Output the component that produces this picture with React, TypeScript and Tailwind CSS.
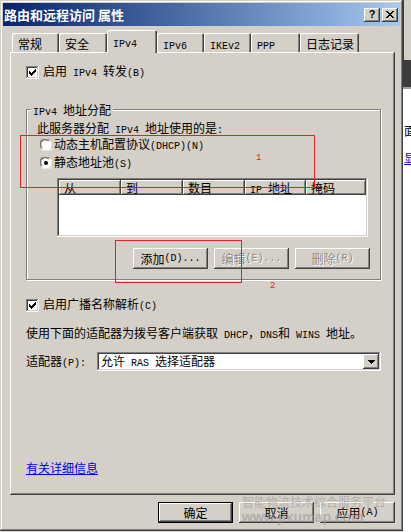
import React from "react";

const CJK_SPLIT = /([\u2E80-\u9FFF\u3000-\u303F\uFF00-\uFFEF]+)/;
const CJK_TEST = /[\u2E80-\u9FFF\u3000-\u303F\uFF00-\uFFEF]/;

function T({ s }: { s: string }) {
  const parts = s.split(CJK_SPLIT).filter((p) => p.length > 0);
  return (
    <>
      {parts.map((p, i) =>
        CJK_TEST.test(p) ? (
          <span key={i} className="font-['Noto_Sans_CJK_SC',sans-serif] text-[12px]">
            {p}
          </span>
        ) : (
          <span key={i} className="font-['Liberation_Mono',monospace] text-[10px] whitespace-pre">
            {p}
          </span>
        )
      )}
    </>
  );
}

const raised =
  "shadow-[inset_-1px_-1px_#404040,inset_1px_1px_#ffffff,inset_-2px_-2px_#808080,inset_2px_2px_#d4d0c8]";
const sunken =
  "shadow-[inset_-1px_-1px_#ffffff,inset_1px_1px_#808080,inset_-2px_-2px_#d4d0c8,inset_2px_2px_#404040]";

function CheckBox() {
  return (
    <span className={"inline-flex w-[13px] h-[13px] bg-white items-center justify-center shrink-0 " + sunken}>
      <svg width="7" height="7" viewBox="0 0 7 7" shapeRendering="crispEdges">
        <path d="M6 0h1v3h-1v1h-1v1h-1v1h-1v1h-1v-1h-1v-1h-1v-3h1v1h1v1h1v-1h1v-1h1z" fill="#000" />
      </svg>
    </span>
  );
}

function Radio({ on }: { on?: boolean }) {
  return (
    <svg width="12" height="12" viewBox="0 0 12 12" className="shrink-0">
      <circle cx="6" cy="6" r="5.5" fill="#ffffff" />
      <path d="M1.1 9.5 A5.5 5.5 0 0 1 9.5 1.1" stroke="#808080" strokeWidth="1" fill="none" />
      <path d="M2 8.6 A4.5 4.5 0 0 1 8.6 2" stroke="#404040" strokeWidth="1" fill="none" />
      <path d="M2.5 10.9 A5.5 5.5 0 0 0 10.9 2.5" stroke="#ffffff" strokeWidth="1" fill="none" />
      {on && <circle cx="6" cy="6" r="2" fill="#000" />}
    </svg>
  );
}

function Btn({ label, disabled, def }: { label: string; disabled?: boolean; def?: boolean }) {
  if (def) {
    return (
      <div className="w-[75px] h-[21px] border border-black">
        <div
          className={
            "w-full h-full flex items-center justify-center leading-[14px] text-black shadow-[inset_-1px_-1px_#404040,inset_1px_1px_#ffffff,inset_-2px_-2px_#808080]"
          }
        >
          <T s={label} />
        </div>
      </div>
    );
  }
  return (
    <div
      className={
        "w-[75px] h-[21px] flex items-center justify-center leading-[14px] " +
        raised +
        (disabled ? " text-[#8a8a8a] [text-shadow:1px_1px_0_#ffffff]" : " text-black")
      }
    >
      <T s={label} />
    </div>
  );
}

function Tab({ label, w, sel }: { label: string; w: string; sel?: boolean }) {
  if (sel) {
    return (
      <div
        className={
          w +
          " h-[23px] -mb-[1px] relative z-10 bg-[#d4d0c8] rounded-t-[2px] pl-[6px] pt-[4px] leading-[14px] text-black shadow-[inset_1px_1px_#ffffff,inset_-1px_0_#404040,inset_-2px_0_#808080]"
        }
      >
        <T s={label} />
      </div>
    );
  }
  return (
    <div
      className={
        w +
        " h-[19px] bg-[#d4d0c8] rounded-t-[2px] pl-[6px] pt-[3px] leading-[14px] text-black shadow-[inset_1px_1px_#ffffff,inset_-1px_0_#404040,inset_-2px_0_#808080]"
      }
    >
      <T s={label} />
    </div>
  );
}

export default function App() {
  return (
    <div className="w-[411px] h-[532px] bg-[#d4d0c8] flex overflow-hidden relative">
      {/* window */}
      <div
        className={
          "w-[403px] h-[531px] bg-[#d4d0c8] p-[3px] flex flex-col shrink-0 shadow-[inset_-1px_-1px_#404040,inset_1px_1px_#d4d0c8,inset_-2px_-2px_#808080,inset_2px_2px_#ffffff]"
        }
      >
        {/* title bar */}
        <div className="h-[23px] bg-linear-to-r from-[#0a246a] to-[#a6caf0] flex items-center pl-[1px] pr-[2px]">
          <span className="text-white font-bold text-[13px] font-['Noto_Sans_CJK_SC',sans-serif] leading-[16px]">
            路由和远程访问 属性
          </span>
          <div className="ml-auto flex gap-[2px]">
            <div
              className={
                "w-[16px] h-[14px] bg-[#d4d0c8] flex items-center justify-center text-[11px] font-bold leading-none font-['Liberation_Sans',sans-serif] text-black " +
                raised
              }
            >
              ?
            </div>
            <div
              className={
                "w-[16px] h-[14px] bg-[#d4d0c8] flex items-center justify-center " + raised
              }
            >
              <svg width="8" height="7" viewBox="0 0 8 7" shapeRendering="crispEdges">
                <path d="M0 0h2v1h1v1h2v-1h1v-1h2v1h-1v1h-1v1h-1v1h1v1h1v1h1v1h-2v-1h-1v-1h-2v1h-1v1h-2v-1h1v-1h1v-1h1v-1h-1v-1h-1v-1h-1z" fill="#000" />
              </svg>
            </div>
          </div>
        </div>

        {/* content */}
        <div className="flex flex-col pl-[7px] mt-[4px]">
          {/* tabs */}
          <div className="h-[22px] flex items-end pl-[2px]">
            <Tab label="常规" w="w-[47px]" />
            <Tab label="安全" w="w-[48px]" />
            <Tab label="IPv4" w="w-[50px]" sel />
            <Tab label="IPv6" w="w-[47px]" />
            <Tab label="IKEv2" w="w-[47px]" />
            <Tab label="PPP" w="w-[49px]" />
            <Tab label="日志记录" w="w-[59px]" />
          </div>

          {/* panel */}
          <div
            className={
              "w-[385px] h-[443px] bg-[#d4d0c8] flex flex-col pl-[16px] text-black shadow-[inset_-1px_-1px_#404040,inset_1px_1px_#ffffff,inset_-2px_-2px_#808080]"
            }
          >
            <div className="mt-[13px] h-[14px] flex items-center gap-[4px] leading-[14px]">
              <CheckBox />
              <span>
                <T s="启用 IPv4 转发(B)" />
              </span>
            </div>

            {/* group box */}
            <div className="mt-[30px] w-[355px] h-[171px] border border-[#808080] shadow-[inset_1px_1px_#ffffff,1px_1px_#ffffff] flex flex-col pl-[10px] pr-[10px]">
              <div className="self-start -ml-[6px] -mt-[8px] px-[2px] bg-[#d4d0c8] h-[14px] leading-[14px]">
                <T s="IPv4 地址分配" />
              </div>
              <div className="mt-[4px] h-[14px] leading-[14px]">
                <T s="此服务器分配 IPv4 地址使用的是:" />
              </div>
              <div className="mt-[4px] h-[14px] leading-[14px] pl-[3px] flex items-center gap-[2px]">
                <Radio />
                <span>
                  <T s="动态主机配置协议(DHCP)(N)" />
                </span>
              </div>
              <div className="mt-[4px] h-[14px] leading-[14px] pl-[3px] flex items-center gap-[2px]">
                <Radio on />
                <span>
                  <T s="静态地址池(S)" />
                </span>
              </div>

              {/* list view */}
              <div className={"mt-[8px] ml-[20px] w-[311px] h-[59px] bg-white p-[2px] flex flex-col " + sunken}>
                <div className="h-[15px] flex">
                  {[
                    ["从", "w-[62px]"],
                    ["到", "w-[62px]"],
                    ["数目", "w-[62px]"],
                    ["IP 地址", "w-[61px]"],
                    ["掩码", "flex-1"],
                  ].map(([t, w]) => (
                    <div
                      key={t}
                      className={
                        w +
                        " h-[15px] bg-[#d4d0c8] pl-[5px] leading-[15px] shadow-[inset_-1px_-1px_#404040,inset_1px_1px_#ffffff,inset_-2px_-2px_#808080]"
                      }
                    >
                      <T s={t} />
                    </div>
                  ))}
                </div>
              </div>

              <div className="mt-[11px] flex justify-end gap-[6px]">
                <Btn label="添加(D)..." />
                <Btn label="编辑(E)..." disabled />
                <Btn label="删除(R)" disabled />
              </div>
            </div>

            <div className="mt-[18px] h-[14px] flex items-center gap-[4px] leading-[14px]">
              <CheckBox />
              <span>
                <T s="启用广播名称解析(C)" />
              </span>
            </div>

            <div className="mt-[13px] h-[14px] leading-[14px]">
              <T s="使用下面的适配器为拨号客户端获取 DHCP，DNS和 WINS 地址。" />
            </div>

            <div className="mt-[13px] h-[19px] flex items-center leading-[14px]">
              <span className="w-[71px]">
                <T s="适配器(P):" />
              </span>
              <div className={"w-[284px] h-[19px] bg-white flex items-center pl-[4px] pr-[2px] " + sunken}>
                <span className="flex-1 leading-[14px]">
                  <T s="允许 RAS 选择适配器" />
                </span>
                <div className={"w-[16px] h-[15px] bg-[#d4d0c8] flex items-center justify-center " + raised}>
                  <svg width="7" height="4" viewBox="0 0 7 4" shapeRendering="crispEdges">
                    <path d="M0 0h7v1h-1v1h-1v1h-1v1h-1v-1h-1v-1h-1v-1h-1z" fill="#000" />
                  </svg>
                </div>
              </div>
            </div>

            <div className="mt-[89px] h-[14px] leading-[14px] text-[#0000ff] underline">
              <T s="有关详细信息" />
            </div>
          </div>

          {/* bottom buttons */}
          <div className="w-[385px] mt-[7px] flex justify-end gap-[6px]">
            <Btn label="确定" def />
            <Btn label="取消" />
            <Btn label="应用(A)" />
          </div>
        </div>
      </div>

      {/* background window strip */}
      <div className="flex-1 flex flex-col overflow-hidden">
        <div className="h-[60px] bg-[#d4d0c8] border-l border-[#404040]"></div>
        <div className="h-[27px] bg-[#3c3c3c]"></div>
        <div className="h-[2px] bg-[#a0a0a0]"></div>
        <div className="flex-1 bg-white flex flex-col pl-[1px]">
          <div className="mt-[34px] h-[14px] leading-[14px] whitespace-nowrap text-black">
            <T s="面" />
          </div>
          <div className="mt-[13px] h-[14px] leading-[14px] whitespace-nowrap text-[#0000ff] underline">
            <T s="显" />
          </div>
        </div>
      </div>

      {/* annotations */}
      <div className="absolute left-[20px] top-[135px] w-[295px] h-[53px] border border-[#e52222]"></div>
      <div className="absolute left-[256px] top-[153px] text-[9px] leading-[10px] text-[#e52222] font-['Liberation_Mono',monospace]">
        1
      </div>
      <div className="absolute left-[115px] top-[240px] w-[127px] h-[43px] border border-[#e52222]"></div>
      <div className="absolute left-[270px] top-[281px] text-[9px] leading-[10px] text-[#e52222] font-['Liberation_Mono',monospace]">
        2
      </div>

      {/* watermark */}
      <div className="absolute left-[242px] top-[495px] flex flex-col opacity-60 pointer-events-none">
        <span className="text-[12px] leading-[14px] text-[#9a9a9a] font-['Noto_Sans_CJK_SC',sans-serif]">
          智能物流技术综合服务平台
        </span>
        <span className="text-[14px] leading-[16px] text-[#9a9a9a] font-bold font-['Liberation_Sans',sans-serif]">
          www.jixumap.com
        </span>
      </div>
    </div>
  );
}
